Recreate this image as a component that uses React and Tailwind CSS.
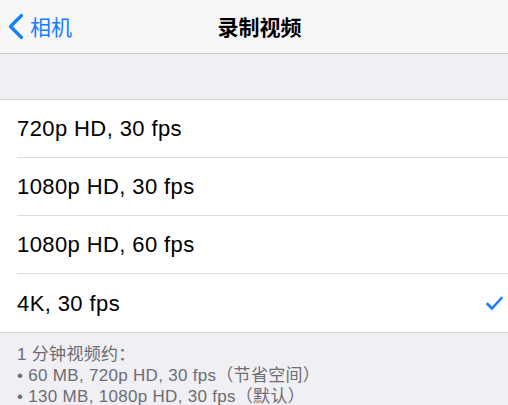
export default function App() {
  const rows = ["720p HD, 30 fps", "1080p HD, 30 fps", "1080p HD, 60 fps", "4K, 30 fps"];
  return (
    <div className="w-[508px] h-[405px] overflow-hidden bg-[#efeff4]" style={{ fontFamily: '"Liberation Sans", "Noto Sans CJK SC", sans-serif' }}>
      <div className="h-[54px] bg-[#f7f7f8] border-b border-[#c8c7cc] grid grid-cols-[1fr_auto_1fr] items-center">
        <div className="flex items-center pl-[7px] gap-[6px] text-[#157efb]">
          <svg width="17" height="27" viewBox="0 0 17 27" fill="none">
            <path d="M14.5 2.5 L3.5 13.5 L14.5 24.5" stroke="#157efb" strokeWidth="3.2" strokeLinecap="round" strokeLinejoin="round" />
          </svg>
          <span className="text-[21px] leading-none" style={{ fontFamily: '"Noto Sans CJK SC", sans-serif' }}>相机</span>
        </div>
        <div className="pl-[11px] text-[21px] font-semibold text-black leading-none" style={{ fontFamily: '"Noto Sans CJK SC", sans-serif' }}>录制视频</div>
        <div />
      </div>
      <div className="h-[45px]" />
      <div className="bg-white border-t border-b border-[#d6d6da]">
        {rows.map((r, i) => (
          <div key={r} className="pl-[17px] h-[58px]">
            <div className={`h-full flex items-center justify-between pr-[5px] ${i < rows.length - 1 ? "border-b border-[#dcdce0]" : ""}`}>
              <span className="text-[22px] tracking-[0.4px] text-black">{r}</span>
              {i === rows.length - 1 && (
                <svg width="17" height="15" viewBox="0 0 17 15" fill="none">
                  <path d="M1.5 8 L6 12.5 L15.5 2" stroke="#157efb" strokeWidth="2.6" strokeLinecap="round" strokeLinejoin="round" />
                </svg>
              )}
            </div>
          </div>
        ))}
      </div>
      <div className="pl-[17px] pt-[11px] text-[17px] tracking-[0.3px] leading-[21px] text-[#6d6d72]">
        <div>1 分钟视频约：</div>
        <div>• 60 MB, 720p HD, 30 fps（节省空间）</div>
        <div>• 130 MB, 1080p HD, 30 fps（默认）</div>
      </div>
    </div>
  );
}
